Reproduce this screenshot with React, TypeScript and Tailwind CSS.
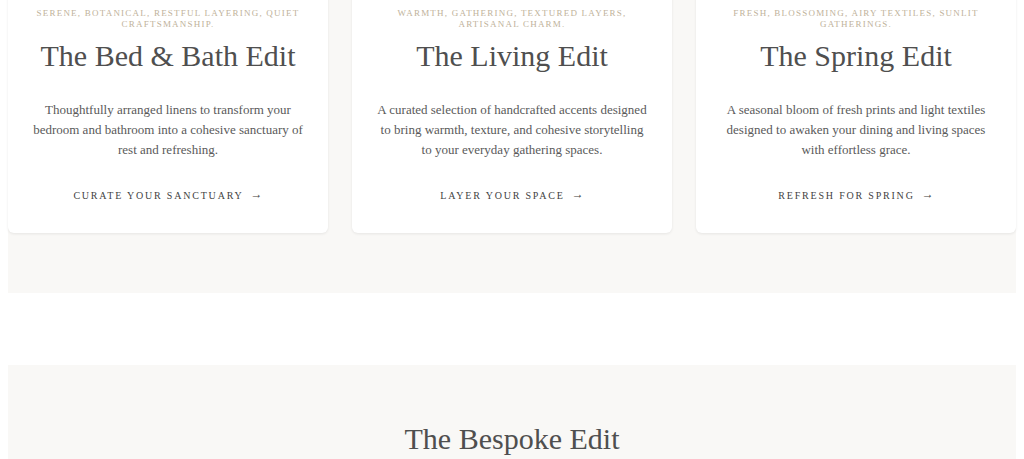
type Edit = {
	mood: string;
	title: string;
	blurb: string;
	cta: string;
};

const edits: Edit[] = [
	{
		mood: "Serene, botanical, restful layering, quiet craftsmanship.",
		title: "The Bed & Bath Edit",
		blurb:
			"Thoughtfully arranged linens to transform your bedroom and bathroom into a cohesive sanctuary of rest and refreshing.",
		cta: "Curate your sanctuary",
	},
	{
		mood: "Warmth, gathering, textured layers, artisanal charm.",
		title: "The Living Edit",
		blurb:
			"A curated selection of handcrafted accents designed to bring warmth, texture, and cohesive storytelling to your everyday gathering spaces.",
		cta: "Layer your space",
	},
	{
		mood: "Fresh, blossoming, airy textiles, sunlit gatherings.",
		title: "The Spring Edit",
		blurb:
			"A seasonal bloom of fresh prints and light textiles designed to awaken your dining and living spaces with effortless grace.",
		cta: "Refresh for spring",
	},
];

function EditCard({ edit }: { edit: Edit }) {
	return (
		<div className="flex flex-col items-center rounded-md bg-white px-6 pt-10 pb-[30px] text-center shadow-[0_1px_3px_rgba(0,0,0,0.08)]">
			<p className="text-[9px] uppercase leading-[11px] tracking-[0.135em] text-[#c0b29a]">{edit.mood}</p>
			<h3 className="mt-[8px] text-[30px] leading-[36px] text-[#4f4f4f]">{edit.title}</h3>
			<p className="mt-[26px] text-[13px] leading-[20px] text-[#5a5a5a]">{edit.blurb}</p>
			<a className="mt-[28px] flex h-[15px] items-center gap-[7px] text-[10px] uppercase leading-[15px] tracking-[0.18em] text-[#3f3f3f]">
				{edit.cta}
				<span className="pb-[3px] text-[12px] leading-none tracking-normal">→</span>
			</a>
		</div>
	);
}

export default function App() {
	return (
		<div className="min-h-screen bg-white" style={{ fontFamily: '"Liberation Serif", "DejaVu Serif", serif' }}>
			<div className="-mt-[32px] px-2">
				<section className="bg-[#f9f8f6] pb-[60px]">
					<div className="grid grid-cols-3 gap-6">
						{edits.map((edit) => (
							<EditCard key={edit.title} edit={edit} />
						))}
					</div>
				</section>
				<div className="h-[72px]" />
				<section className="flex flex-col items-center bg-[#f9f8f6] pt-[56px] pb-20">
					<h2 className="text-[30px] leading-[36px] text-[#4f4f4f]">The Bespoke Edit</h2>
				</section>
			</div>
		</div>
	);
}
